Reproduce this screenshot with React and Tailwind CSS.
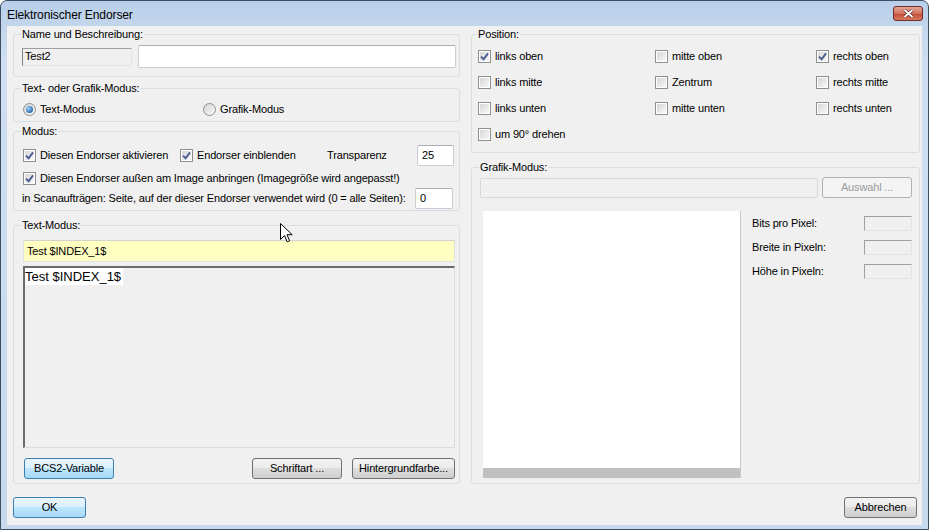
import React from "react";

const Check = ({ checked }) => (
  <span className="w-[13px] h-[13px] shrink-0 border border-[#8e8f8f] bg-white p-[1px] flex">
    <span className="flex-1 flex items-center justify-center bg-[linear-gradient(135deg,#d6d6d6,#f8f8f8)]">
      {checked && (
        <svg width="9" height="9" viewBox="0 0 9 9">
          <path d="M1 4.6 L3.6 7.2 L8 1.4" fill="none" stroke="#4a5c92" strokeWidth="1.9" />
        </svg>
      )}
    </span>
  </span>
);

const CheckLabel = ({ checked, children, className = "" }) => (
  <div className={`flex items-center gap-[4px] whitespace-nowrap ${className}`}>
    <Check checked={checked} />
    <span>{children}</span>
  </div>
);

const Radio = ({ checked, children, className = "" }) => (
  <div className={`flex items-center gap-[4px] whitespace-nowrap ${className}`}>
    <span className="w-[13px] h-[13px] rounded-full border border-[#8e8f8f] bg-[linear-gradient(135deg,#d4d4d4,#fbfbfb)] flex items-center justify-center">
      {checked && (
        <span className="w-[7px] h-[7px] rounded-full bg-[radial-gradient(circle_at_35%_35%,#9fd0f5,#2a6bb5_70%,#1b4f8f)]" />
      )}
    </span>
    <span>{children}</span>
  </div>
);

const Button = ({ children, className = "", variant = "normal" }) => {
  const styles = {
    normal:
      "border-[#707070] bg-[linear-gradient(#f2f2f2_0%,#ebebeb_50%,#dddddd_50%,#cfcfcf_100%)] text-black",
    focus:
      "border-[#3c7fb1] bg-[linear-gradient(#eaf6fd_0%,#d9f0fc_50%,#bee6fd_50%,#a7d9f5_100%)] text-black",
    disabled: "border-[#adb2b5] bg-[#f4f4f4] text-[#9a9a9a]",
  };
  return (
    <div
      className={`h-[21px] shrink-0 rounded-[3px] border flex items-center justify-center ${styles[variant]} ${className}`}
    >
      {children}
    </div>
  );
};

const Group = ({ title, className = "", children }) => (
  <fieldset className={`border border-[#d5dfe5] rounded-[3px] pl-[8px] pr-[3px] ${className}`}>
    <legend className="px-[1px] -ml-[1px] leading-[13px]">{title}</legend>
    {children}
  </fieldset>
);

const Sunken = ({ className = "" }) => (
  <div className={`shrink-0 bg-[#f0f0f0] border border-t-[#a0a0a0] border-l-[#a0a0a0] border-r-[#e3e3e3] border-b-[#e3e3e3] ${className}`} />
);

export default function App() {
  return (
    <div className="relative w-[929px] h-[530px] flex flex-col rounded-t-[7px] border border-[#3f4f63] bg-[linear-gradient(#b9cfe9,#cfdff1_60px,#c8d9ee)] font-['Liberation_Sans',Arial,sans-serif] text-[11px] tracking-[-0.15px] text-black overflow-hidden">
      {/* title bar */}
      <div className="h-[25px] flex items-start justify-between pl-[6px] pr-[5px]">
        <span className="mt-[7px] text-[12px] leading-[14px] tracking-[-0.1px]">Elektronischer Endorser</span>
        <div className="mt-[5px] w-[30px] h-[15px] rounded-[3px] border border-[#6e2e26] bg-[linear-gradient(#e6a595,#d2735f_50%,#c24a35_51%,#d77a5e)] flex items-center justify-center">
          <svg width="11" height="9" viewBox="0 0 11 9">
            <path d="M1.5 1 L9.5 8 M9.5 1 L1.5 8" stroke="#5a2a22" strokeWidth="3.2" />
            <path d="M1.5 1 L9.5 8 M9.5 1 L1.5 8" stroke="#ffffff" strokeWidth="1.8" />
          </svg>
        </div>
      </div>

      {/* client */}
      <div className="flex-1 mx-[6px] mb-[4px] bg-[#f0f0f0] flex flex-col">
        <div className="flex pt-[2px] pl-[6px]">
          {/* left column */}
          <div className="w-[447px] flex flex-col">
            <Group title="Name und Beschreibung:" className="h-[49px]">
              <div className="pt-[4px] flex items-center gap-[6px]">
                <div className="w-[110px] h-[18px] shrink-0 bg-[#f0f0f0] border border-t-[#a0a0a0] border-l-[#808080] border-r-[#e3e3e3] border-b-[#e3e3e3] pl-[2px] flex items-center">
                  Test2
                </div>
                <div className="w-[318px] h-[23px] shrink-0 bg-white border border-[#c9ccd2] border-t-[#abadb3] rounded-[2px]" />
              </div>
            </Group>

            <Group title="Text- oder Grafik-Modus:" className="h-[40px] mt-[5px]">
              <div className="pt-[6px] flex items-center pl-[1px]">
                <Radio checked className="w-[180px]">Text-Modus</Radio>
                <Radio>Grafik-Modus</Radio>
              </div>
            </Group>

            <Group title="Modus:" className="h-[86px] mt-[3px]">
              <div className="pt-[6px] pl-[1px] flex flex-col">
                <div className="h-[22px] flex items-center">
                  <CheckLabel checked className="w-[157px]">Diesen Endorser aktivieren</CheckLabel>
                  <CheckLabel checked className="w-[147px]">Endorser einblenden</CheckLabel>
                  <span className="w-[90px]">Transparenz</span>
                  <div className="w-[37px] h-[21px] bg-white border border-[#c9ccd2] border-t-[#abadb3] rounded-[2px] pl-[4px] flex items-center">25</div>
                </div>
                <CheckLabel checked className="mt-[6px] h-[13px]">
                  Diesen Endorser außen am Image anbringen (Imagegröße wird angepasst!)
                </CheckLabel>
                <div className="mt-[3px] h-[21px] flex items-center">
                  <span className="w-[393px] -ml-[1px] whitespace-nowrap">
                    in Scanaufträgen: Seite, auf der dieser Endorser verwendet wird (0 = alle Seiten):
                  </span>
                  <div className="w-[38px] h-[21px] bg-white border border-[#c9ccd2] border-t-[#abadb3] rounded-[2px] pl-[4px] flex items-center">0</div>
                </div>
              </div>
            </Group>

            <Group title="Text-Modus:" className="h-[265px] mt-[8px]">
              <div className="pt-[8px] pl-[1px] flex flex-col">
                <div className="w-[432px] h-[22px] bg-[#ffffc2] border border-[#e2e3e0] border-t-[#d3d4cf] pl-[3px] flex items-center">
                  Test $INDEX_1$
                </div>
                <div className="mt-[4px] w-[432px] h-[182px] bg-[#f0f0f0] border-t-2 border-l-2 border-t-[#6b6b6b] border-l-[#6b6b6b] border-r border-b border-r-[#dcdcdc] border-b-[#dcdcdc]">
                  <span className="inline-block bg-white text-[13px] leading-[17px] tracking-normal pr-[2px]">Test $INDEX_1$</span>
                </div>
                <div className="mt-[10px] flex items-center">
                  <Button variant="focus" className="w-[90px] ml-[1px]">BCS2-Variable</Button>
                  <Button className="w-[90px] ml-[138px]">Schriftart ...</Button>
                  <Button className="w-[103px] ml-[10px]">Hintergrundfarbe...</Button>
                </div>
              </div>
            </Group>
          </div>

          {/* right column */}
          <div className="w-[449px] ml-[11px] flex flex-col">
            <Group title="Position:" className="h-[125px] !pl-[6px]">
              <div className="pt-[7px] flex flex-col gap-[10px]">
                <div className="h-[16px] flex items-center">
                  <CheckLabel checked className="w-[177px]">links oben</CheckLabel>
                  <CheckLabel className="w-[161px]">mitte oben</CheckLabel>
                  <CheckLabel checked>rechts oben</CheckLabel>
                </div>
                <div className="h-[16px] flex items-center">
                  <CheckLabel className="w-[177px]">links mitte</CheckLabel>
                  <CheckLabel className="w-[161px]">Zentrum</CheckLabel>
                  <CheckLabel>rechts mitte</CheckLabel>
                </div>
                <div className="h-[16px] flex items-center">
                  <CheckLabel className="w-[177px]">links unten</CheckLabel>
                  <CheckLabel className="w-[161px]">mitte unten</CheckLabel>
                  <CheckLabel>rechts unten</CheckLabel>
                </div>
                <div className="h-[16px] flex items-center">
                  <CheckLabel>um 90° drehen</CheckLabel>
                </div>
              </div>
            </Group>

            <Group title="Grafik-Modus:" className="h-[323px] mt-[8px]">
              <div className="pt-[3px] flex items-center">
                <div className="w-[338px] h-[20px] bg-[#f0f0f0] border border-[#d9d9d9] rounded-[2px]" />
                <Button variant="disabled" className="w-[90px] ml-[4px]">Auswahl ...</Button>
              </div>
              <div className="mt-[13px] flex">
                <div className="ml-[3px] w-[258px] h-[267px] flex flex-col border-r border-[#c8c8c8]">
                  <div className="flex-1 bg-white" />
                  <div className="h-[10px] bg-[#c0c0c0]" />
                </div>
                <div className="ml-[11px] w-[160px] pt-[4px] flex flex-col gap-[8px]">
                  <div className="h-[16px] flex items-center justify-between">
                    <span>Bits pro Pixel:</span>
                    <Sunken className="w-[48px] h-[15px]" />
                  </div>
                  <div className="h-[16px] flex items-center justify-between">
                    <span>Breite in Pixeln:</span>
                    <Sunken className="w-[48px] h-[15px]" />
                  </div>
                  <div className="h-[16px] flex items-center justify-between">
                    <span>Höhe in Pixeln:</span>
                    <Sunken className="w-[48px] h-[15px]" />
                  </div>
                </div>
              </div>
            </Group>
          </div>
        </div>

        <div className="mt-[13px] pl-[6px] pr-[5px] flex justify-between">
          <Button variant="focus" className="w-[73px]">OK</Button>
          <Button className="w-[73px]">Abbrechen</Button>
        </div>
      </div>

      {/* mouse pointer */}
      <svg className="absolute left-[279px] top-[222px]" width="13" height="20" viewBox="0 0 13 20">
        <path d="M0.5 0.5 L0.5 16.5 L4.5 12.5 L7.2 18.8 L9.6 17.8 L7 11.7 L12.2 11.7 Z" fill="#ffffff" stroke="#000000" strokeWidth="1" />
      </svg>
    </div>
  );
}
